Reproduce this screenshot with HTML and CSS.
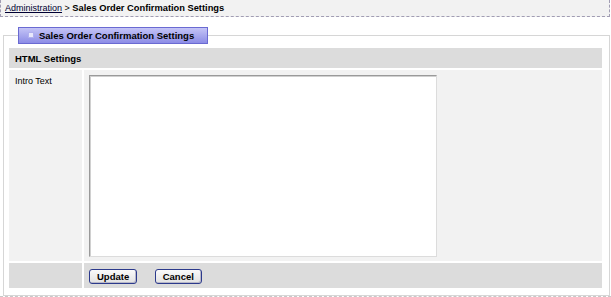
FILE: index.html
```html
<!DOCTYPE html>
<html lang="en">
<head>
  <meta charset="UTF-8" />
  <title>Sales Order Confirmation Settings</title>
  <link rel="stylesheet" href="styles.css">
</head>
<body>
  <div class="page">
    <div class="crumbs">
      <a href="#">Administration</a> &gt; <strong>Sales Order Confirmation Settings</strong>
    </div>

    <fieldset class="box">
      <legend class="box-title"><span class="box-icon"></span>Sales Order Confirmation Settings</legend>

      <table class="form">
        <tr class="head">
          <td colspan="2">HTML Settings</td>
        </tr>
        <tr class="field">
          <td class="label">Intro Text</td>
          <td class="value"><textarea class="editor"></textarea></td>
        </tr>
        <tr class="actions">
          <td></td>
          <td>
            <button class="btn">Update</button>
            <button class="btn">Cancel</button>
          </td>
        </tr>
      </table>
    </fieldset>
  </div>
</body>
</html>
```

FILE: styles.css
```css
body {
  margin: 0;
  background: #fff;
  font-family: "Liberation Sans", Arial, sans-serif;
  font-size: 9px;
  color: #000;
}
.page {
  width: 611px;
  height: 297px;
  box-sizing: border-box;
  border-bottom: 1px dashed #c8c8c8;
}
.crumbs {
  width: 610px;
  height: 17px;
  box-sizing: border-box;
  padding: 3px 4px 0;
  background: #f2f2f2;
  border: 1px dashed #a19db3;
  border-top: none;
}
.crumbs a {
  color: #000033;
}
.crumbs strong {
  font-size: 9.3px;
}
.box {
  margin: 10px 1px 0 3px;
  padding: 2px 4px 5px 3px;
  border: 1px solid #d6d6d6;
}
.box-title {
  margin-left: 11px;
  width: 190px;
  height: 17px;
  box-sizing: border-box;
  padding: 2px 0 0 9px;
  background: linear-gradient(#c4c4f6, #8c8ce6);
  border: 1px solid #6a6ad2;
  font-weight: bold;
  font-size: 9.5px;
  color: #000;
}
.box-icon {
  display: inline-block;
  width: 4px;
  height: 4px;
  margin-right: 5px;
  vertical-align: 1px;
  background: #e8e8fc;
  border: 1px solid #b0b0ee;
}
.form {
  width: 597px;
  border-spacing: 2px;
}
.form td {
  padding: 0;
  background: #f2f2f2;
  vertical-align: top;
}
.head td {
  height: 20px;
  padding-left: 6px;
  background: #dcdcdc;
  font-weight: bold;
  font-size: 9.5px;
  vertical-align: middle;
}
.field td {
  height: 185px;
}
.label {
  width: 67px;
  padding: 6px 0 0 6px !important;
}
.value {
  padding: 5px 0 0 5px !important;
}
.editor {
  display: block;
  width: 348px;
  height: 182px;
  box-sizing: border-box;
  margin: 0;
  padding: 0;
  background: #fff;
  border: 1px solid;
  border-color: #9a9a9a #dcdcdc #dcdcdc #9a9a9a;
  box-shadow: inset 1px 1px 0 #d0d0d0;
  resize: none;
}
.actions td {
  height: 24px;
  background: #dcdcdc;
  vertical-align: middle;
}
.actions td + td {
  padding-left: 5px;
  padding-top: 1px;
}
.btn {
  height: 15px;
  margin: 0 15px 0 0;
  padding: 0 7px;
  background: linear-gradient(#fafafa, #e2e2e2);
  border: 1px solid #2c3a8c;
  border-radius: 3px;
  box-shadow: inset -1px -1px 0 #b8b8c8;
  font-family: "Liberation Sans", Arial, sans-serif;
  font-weight: bold;
  font-size: 9.5px;
  color: #000;
  vertical-align: middle;
}
```
